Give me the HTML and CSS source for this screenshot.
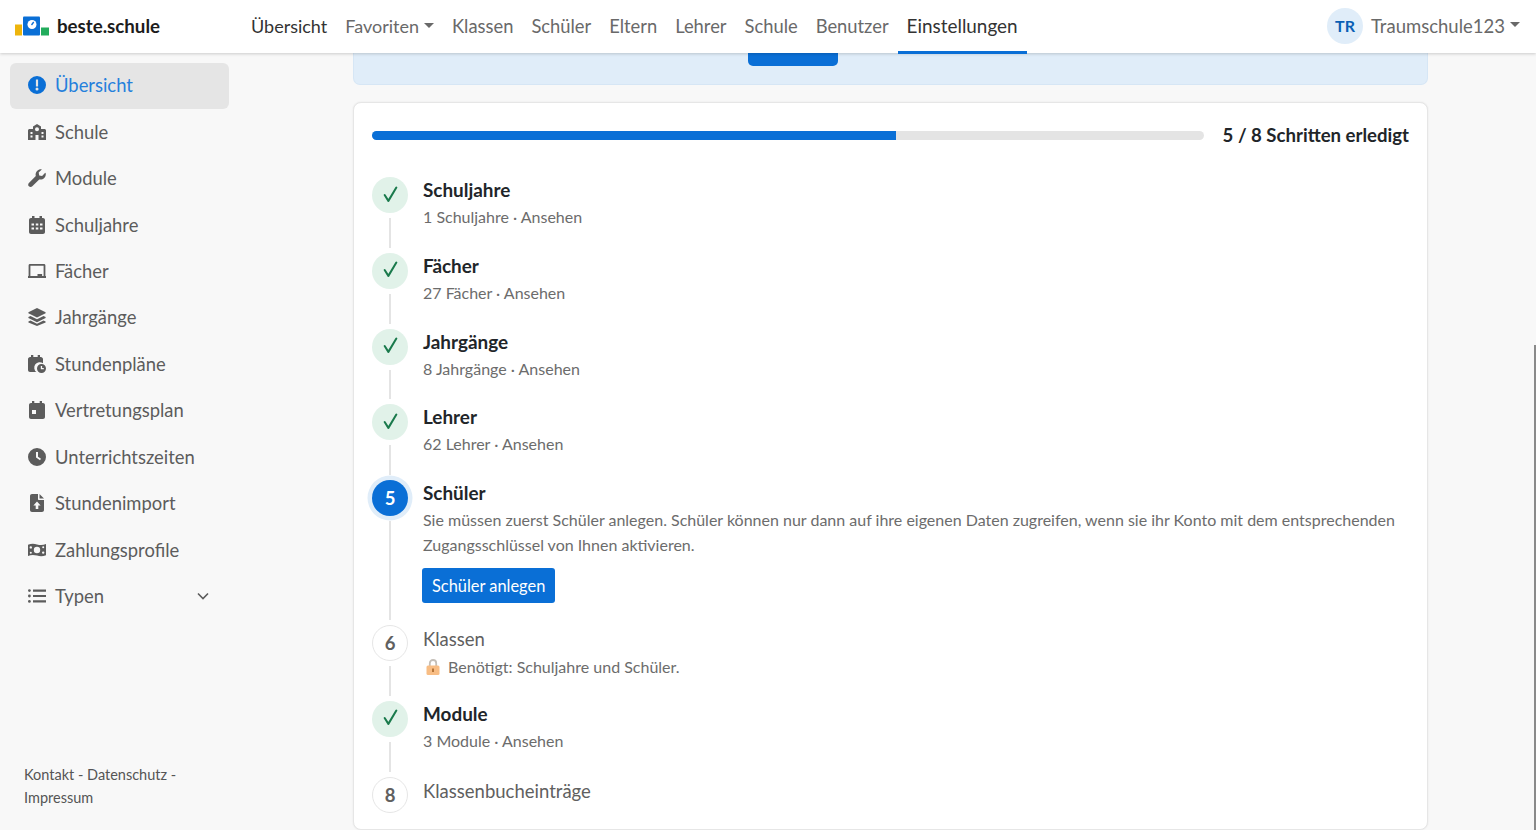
FILE: index.html
```html
<!DOCTYPE html>
<html>
<head>
  <title>beste.schule</title>
  <link rel="stylesheet" href="styles.css">
</head>
<body>
  <svg class="icon-defs" width="0" height="0">
    <symbol id="i-school" viewBox="0 0 18 16"><path fill="currentColor" d="M9 0l4 2.4V5h3.4c.9 0 1.6.7 1.6 1.6V16H0V6.600C0 5.700.7 5 1.600 5H5V2.400zM9 3.200a2 2 0 100 4 2 2 0 000-4zM7.500 11v5h3v-5zM2.500 8v2h2V8zm0 3.500v2h2v-2zm11-3.500v2h2V8zm0 3.500v2h2v-2z" fill-rule="evenodd"/></symbol>
    <symbol id="i-wrench" viewBox="0 0 18 18"><path fill="currentColor" d="M17.700 4.200c.3 1.900-.2 3.600-1.500 4.900-1.400 1.400-3.300 1.800-5 1.300L4.300 17.300c-.9.900-2.400.9-3.400 0s-.9-2.500 0-3.400l6.900-6.900C7.300 5.300 7.700 3.300 9.100 1.900 10.400.6 12.200.1 13.800.4l-3.100 3.100.5 2.900 2.900.5 3.100-3.100z"/></symbol>
    <symbol id="i-cal" viewBox="0 0 16 18"><path fill="currentColor" fill-rule="evenodd" d="M3 0h2.500v2h5V0H13v2h1c1.100 0 2 .9 2 2v12c0 1.100-.9 2-2 2H2c-1.100 0-2-.9-2-2V4c0-1.100.9-2 2-2h1zM2.500 7.500v2h2.500v-2zm4.300 0v2h2.500v-2zm4.200 0v2h2.500v-2zM2.500 11.500v2h2.500v-2zm4.300 0v2h2.500v-2zm4.200 0v2h2.500v-2z"/></symbol>
    <symbol id="i-board" viewBox="0 0 18 14"><path fill="currentColor" fill-rule="evenodd" d="M2 0h14c.8 0 1.400.6 1.400 1.400V12h.6v2H0v-2h.6V1.400C.6.600 1.200 0 2 0zm.4 1.800V12h7.100v-2h4.600v2h1.500V1.800z"/></symbol>
    <symbol id="i-layers" viewBox="0 0 18 18"><path fill="currentColor" d="M9 0l8.600 4.200v1L9 9.500.4 5.200v-1zM2.500 8L9 11.200 15.500 8l2.100 1v1L9 14.300.4 10V9zm0 4.600L9 15.800l6.500-3.200 2.100 1v1L9 18 .4 14.600v-1z"/></symbol>
    <symbol id="i-calclock" viewBox="0 0 18 18"><path fill="currentColor" fill-rule="evenodd" d="M3 0h2.300v2h4.400V0H12v2h.8C14 2 15 3 15 4.200V8.300a5 5 0 00-6.600 8.700H2c-1.100 0-2-.9-2-2V4.200C0 3 1 2 2.200 2H3zM13.500 9a4.500 4.500 0 110 9 4.500 4.500 0 010-9zm-.7 2v3.200h3v-1.300h-1.700V11z"/></symbol>
    <symbol id="i-calday" viewBox="0 0 16 18"><path fill="currentColor" fill-rule="evenodd" d="M3 0h2.300v2h5.400V0H13v2h1c1.100 0 2 .9 2 2v12c0 1.100-.9 2-2 2H2c-1.100 0-2-.9-2-2V4c0-1.100.9-2 2-2h1zM3 9v4h4V9z"/></symbol>
    <symbol id="i-clock" viewBox="0 0 18 18"><path fill="currentColor" fill-rule="evenodd" d="M9 0a9 9 0 110 18A9 9 0 019 0zM8 4v5.500l4 2.700 1-1.500-3-2V4z"/></symbol>
    <symbol id="i-fileup" viewBox="0 0 14 18"><path fill="currentColor" fill-rule="evenodd" d="M2 0h6v5c0 .6.400 1 1 1h5v10c0 1.100-.9 2-2 2H2c-1.100 0-2-.9-2-2V2C0 .9.900 0 2 0zm7.500 0L14 4.500H9.500zM7 7.500L3.400 11.400h2.300V15h2.600v-3.600h2.300z"/></symbol>
    <symbol id="i-money" viewBox="0 0 18 14"><path fill="currentColor" fill-rule="evenodd" d="M0 1.800C3 .4 6 .4 9 1.400s6 1 9-.4v11.200c-3 1.400-6 1.400-9 .4s-6-1-9 .4zM9 3.800a3.200 3.200 0 100 6.400 3.200 3.200 0 000-6.400zM2.800 3.200a1.200 1.200 0 100 2.400 1.200 1.200 0 000-2.400zM15.200 8.400a1.200 1.200 0 100 2.400 1.200 1.200 0 000-2.400zM2.800 8.800a1 1 0 100 2 1 1 0 000-2zM15.200 3.200a1 1 0 100 2 1 1 0 000-2z"/></symbol>
    <symbol id="i-list" viewBox="0 0 18 14"><circle fill="currentColor" cx="1.400" cy="1.600" r="1.400"/><circle fill="currentColor" cx="1.400" cy="7" r="1.400"/><circle fill="currentColor" cx="1.400" cy="12.400" r="1.400"/><path fill="currentColor" d="M5 .5h13v2.200H5zm0 5.400h13v2.200H5zm0 5.400h13v2.200H5z"/></symbol>
    <symbol id="i-check" viewBox="0 0 16 16"><path fill="none" stroke="currentColor" stroke-width="1.900" stroke-linecap="round" stroke-linejoin="round" d="M2.500 8.500L6 14l7.500-12.500"/></symbol>
  </svg>

  <header class="navbar">
    <a class="brand">
      <svg class="brand-logo" viewBox="0 0 34 20" width="34" height="20">
        <rect x="0" y="8.500" width="7" height="11" fill="#eeb50c"/>
        <rect x="8" y="0.500" width="17" height="19" rx="1" fill="#0a6fd6"/>
        <rect x="26" y="11.500" width="8" height="8" fill="#22ac5c"/>
        <circle cx="17" cy="8.500" r="4.500" fill="#fff"/>
        <path d="M16.500 9l2.200-3" stroke="#0a6fd6" stroke-width="1.300"/>
      </svg>
      <span>beste.schule</span>
    </a>
    <nav class="topnav">
      <a class="topnav-link strong">Übersicht</a>
      <a class="topnav-link small">Favoriten <i class="caret"></i></a>
      <a class="topnav-link">Klassen</a>
      <a class="topnav-link">Schüler</a>
      <a class="topnav-link">Eltern</a>
      <a class="topnav-link">Lehrer</a>
      <a class="topnav-link">Schule</a>
      <a class="topnav-link">Benutzer</a>
      <a class="topnav-link active">Einstellungen</a>
    </nav>
    <div class="account">
      <span class="avatar">TR</span>
      <span>Traumschule123</span>
      <i class="caret"></i>
    </div>
  </header>

  <div class="page">
    <aside class="sidebar">
      <ul class="side-list">
        <li class="side-item selected">
          <svg class="side-icon" viewBox="0 0 18 18"><path fill="currentColor" fill-rule="evenodd" d="M9 0a9 9 0 110 18A9 9 0 019 0zM7.900 3.500v7h2.200v-7zM9 11.600a1.500 1.500 0 100 3 1.500 1.500 0 000-3z"/></svg>
          Übersicht
        </li>
        <li class="side-item"><svg class="side-icon"><use href="#i-school"/></svg>Schule</li>
        <li class="side-item"><svg class="side-icon"><use href="#i-wrench"/></svg>Module</li>
        <li class="side-item"><svg class="side-icon"><use href="#i-cal"/></svg>Schuljahre</li>
        <li class="side-item"><svg class="side-icon"><use href="#i-board"/></svg>Fächer</li>
        <li class="side-item"><svg class="side-icon"><use href="#i-layers"/></svg>Jahrgänge</li>
        <li class="side-item"><svg class="side-icon"><use href="#i-calclock"/></svg>Stundenpläne</li>
        <li class="side-item"><svg class="side-icon"><use href="#i-calday"/></svg>Vertretungsplan</li>
        <li class="side-item"><svg class="side-icon"><use href="#i-clock"/></svg>Unterrichtszeiten</li>
        <li class="side-item"><svg class="side-icon"><use href="#i-fileup"/></svg>Stundenimport</li>
        <li class="side-item"><svg class="side-icon"><use href="#i-money"/></svg>Zahlungsprofile</li>
        <li class="side-item">
          <svg class="side-icon"><use href="#i-list"/></svg>Typen
          <svg class="side-chevron" viewBox="0 0 12 8" width="12" height="8"><path fill="none" stroke="currentColor" stroke-width="1.600" d="M1 1.500l5 5 5-5"/></svg>
        </li>
      </ul>
      <p class="side-footer">Kontakt - Datenschutz - Impressum</p>
    </aside>

    <main class="main">
      <div class="banner"><span class="banner-btn"></span></div>

      <section class="card">
        <div class="progress-row">
          <div class="progress"><div class="progress-fill" style="width: 63%"></div></div>
          <strong class="progress-label">5 / 8 Schritten erledigt</strong>
        </div>

        <div class="step done">
          <div class="step-mark"><span class="dot"><svg class="tick"><use href="#i-check"/></svg></span></div>
          <div class="step-body">
            <h3>Schuljahre</h3>
            <p>1 Schuljahre · Ansehen</p>
          </div>
        </div>
        <div class="step done">
          <div class="step-mark"><span class="dot"><svg class="tick"><use href="#i-check"/></svg></span></div>
          <div class="step-body">
            <h3>Fächer</h3>
            <p>27 Fächer · Ansehen</p>
          </div>
        </div>
        <div class="step done">
          <div class="step-mark"><span class="dot"><svg class="tick"><use href="#i-check"/></svg></span></div>
          <div class="step-body">
            <h3>Jahrgänge</h3>
            <p>8 Jahrgänge · Ansehen</p>
          </div>
        </div>
        <div class="step done">
          <div class="step-mark"><span class="dot"><svg class="tick"><use href="#i-check"/></svg></span></div>
          <div class="step-body">
            <h3>Lehrer</h3>
            <p>62 Lehrer · Ansehen</p>
          </div>
        </div>
        <div class="step current">
          <div class="step-mark"><span class="dot">5</span></div>
          <div class="step-body">
            <h3>Schüler</h3>
            <p>Sie müssen zuerst Schüler anlegen. Schüler können nur dann auf ihre eigenen Daten zugreifen, wenn sie ihr Konto mit dem entsprechenden Zugangsschlüssel von Ihnen aktivieren.</p>
            <a class="btn">Schüler anlegen</a>
          </div>
        </div>
        <div class="step locked">
          <div class="step-mark"><span class="dot">6</span></div>
          <div class="step-body">
            <h3>Klassen</h3>
            <p>
              <svg class="lock" viewBox="0 0 14 16" width="14" height="16"><path fill="none" stroke="#c4bfb8" stroke-width="1.800" d="M3.800 7V4.200a3.200 3.200 0 016.400 0V7"/><rect x="0.500" y="6.500" width="13" height="9.500" rx="1.500" fill="#f8bd84"/><rect x="6" y="9.500" width="2" height="3.500" fill="#b5763a"/></svg>
              Benötigt: Schuljahre und Schüler.
            </p>
          </div>
        </div>
        <div class="step done">
          <div class="step-mark"><span class="dot"><svg class="tick"><use href="#i-check"/></svg></span></div>
          <div class="step-body">
            <h3>Module</h3>
            <p>3 Module · Ansehen</p>
          </div>
        </div>
        <div class="step locked last">
          <div class="step-mark"><span class="dot">8</span></div>
          <div class="step-body">
            <h3>Klassenbucheinträge</h3>
          </div>
        </div>
      </section>
    </main>
  </div>

  <div class="scroll-thumb"></div>
</body>
</html>
```

FILE: styles.css
```css
* {
  box-sizing: border-box;
}

html,
body {
  height: 100%;
}

body {
  margin: 0;
  overflow: hidden;
  font-family: "Lato", "Noto Sans", sans-serif;
  font-size: 16px;
  color: #212529;
  background-color: #f8f8f8;
}

.icon-defs {
  position: absolute;
}

h3,
p,
ul {
  margin: 0;
  padding: 0;
}

/* top bar */
.navbar {
  position: relative;
  z-index: 2;
  display: flex;
  align-items: center;
  height: 53px;
  padding: 0 16px 0 15px;
  background-color: #fff;
  box-shadow: 0 1px 3px rgba(0, 0, 0, 0.18);
}

.brand {
  display: flex;
  align-items: center;
  gap: 8px;
  width: 227px;
  padding-bottom: 2px;
  font-size: 18.700px;
  font-weight: 700;
  color: #1c1c1c;
}

.topnav {
  display: flex;
  align-self: flex-start;
  height: 54px;
}

.topnav-link {
  display: flex;
  align-items: center;
  gap: 5px;
  padding: 0 9px 3px;
  font-size: 18.350px;
  color: #696969;
  white-space: nowrap;
}

.topnav-link.strong,
.topnav-link.small {
  font-size: 18px;
}

.topnav-link.strong,
.topnav-link.active {
  color: #333;
}

.topnav-link.active {
  padding-bottom: 0;
  font-size: 18.900px;
  border-bottom: 3px solid #0a6fd6;
}

.caret {
  display: inline-block;
  width: 0;
  height: 0;
  border-top: 5px solid currentColor;
  border-left: 5px solid transparent;
  border-right: 5px solid transparent;
}

.account {
  display: flex;
  align-items: center;
  margin-left: auto;
  padding-bottom: 2px;
  font-size: 18.500px;
  color: #696969;
}

.avatar {
  display: flex;
  align-items: center;
  justify-content: center;
  width: 36px;
  height: 36px;
  margin-right: 8px;
  border-radius: 50%;
  font-size: 16px;
  font-weight: 700;
  color: #0a5fb5;
  background-color: #e0edf9;
}

.account .caret {
  margin-left: 5px;
  margin-bottom: 3px;
}

/* sidebar + content */
.page {
  display: flex;
  height: calc(100% - 53px);
}

.sidebar {
  display: flex;
  flex-direction: column;
  justify-content: space-between;
  width: 353px;
  flex-shrink: 0;
  padding: 10px 0 21px 10px;
}

.side-list {
  list-style: none;
  width: 219px;
}

.side-item {
  display: flex;
  align-items: center;
  height: 46.450px;
  padding-left: 18px;
  padding-bottom: 2px;
  font-size: 18.400px;
  color: #5c5c5c;
}

.side-item.selected {
  color: #2580dc;
  background-color: #e5e5e5;
  border-radius: 6px;
}

.side-item.selected .side-icon {
  color: #0a6fd6;
}

.side-icon {
  width: 18px;
  height: 18px;
  margin-right: 9px;
  flex-shrink: 0;
}

.side-chevron {
  margin-left: auto;
  margin-right: 20px;
}

.side-footer {
  width: 190px;
  padding-left: 14px;
  font-size: 14.500px;
  line-height: 23px;
  color: #555;
}

.main {
  width: 1075px;
}

.banner {
  display: flex;
  justify-content: center;
  height: 32px;
  background-color: #e0edf9;
  border: 1px solid #d6e6f5;
  border-top: 0;
  border-radius: 0 0 7px 7px;
}

.banner-btn {
  width: 90px;
  height: 13px;
  margin-right: 195px;
  background-color: #0a6fd6;
  border-radius: 0 0 5px 5px;
}

.card {
  margin-top: 17px;
  height: 728px;
  padding: 20px 18px 0 18px;
  background-color: #fff;
  border: 1px solid #e6e6e6;
  border-radius: 8px;
  box-shadow: 0 0 2px rgba(0, 0, 0, 0.08);
}

.progress-row {
  display: flex;
  align-items: center;
  justify-content: space-between;
  height: 25px;
  margin-bottom: 29px;
  font-size: 18.600px;
}

.progress-label {
  margin-bottom: 2px;
}

.progress {
  width: 832px;
  height: 9px;
  background-color: #e4e4e4;
  border-radius: 4.500px;
  overflow: hidden;
}

.progress-fill {
  height: 100%;
  background-color: #0a6fd6;
}

.step {
  display: flex;
  min-height: 75.800px;
}

.step.last {
  min-height: 0;
}

.step-mark {
  display: flex;
  flex-direction: column;
  align-items: center;
  width: 36px;
  margin-right: 15px;
  flex-shrink: 0;
}

/* connector between two circles */
.step-mark::after {
  content: "";
  flex: 1;
  width: 2px;
  margin: 5px 0;
  background-color: #e4e4e4;
}

.step.last .step-mark::after {
  display: none;
}

.dot {
  display: flex;
  align-items: center;
  justify-content: center;
  width: 36px;
  height: 36px;
  flex-shrink: 0;
  border-radius: 50%;
  font-size: 18.500px;
  font-weight: 700;
}

.tick {
  width: 17px;
  height: 17px;
  margin-bottom: 2px;
}

.done .dot {
  color: #1a7a4c;
  background-color: #e1f2e9;
}

.current .dot {
  color: #fff;
  background-color: #0a6fd6;
  box-shadow: 0 0 0 4.500px #e0edf9;
}

.locked .dot {
  color: #606060;
  background-color: #fff;
  border: 1px solid #e6e6e6;
}

.locked .step-body {
  padding-top: 2px;
}

.step-body h3 {
  font-size: 18.900px;
  line-height: 25px;
  font-weight: 700;
  color: #212529;
}

.locked .step-body h3 {
  font-size: 18.500px;
  font-weight: 400;
  color: #606060;
}

.step-body p {
  margin-top: 2px;
  font-size: 16px;
  line-height: 25px;
  color: #6c6c6c;
}

.lock {
  margin: 0 4px 0 3px;
  vertical-align: -2px;
}

.btn {
  display: inline-block;
  margin: 11px 0 22px -1px;
  padding: 0 10px;
  height: 35px;
  line-height: 35px;
  font-size: 16.400px;
  color: #fff;
  background-color: #0a6fd6;
  border-radius: 3px;
}

.scroll-thumb {
  position: absolute;
  right: 0;
  top: 345px;
  bottom: 0;
  width: 2px;
  background-color: #8a8a8a;
}
```
